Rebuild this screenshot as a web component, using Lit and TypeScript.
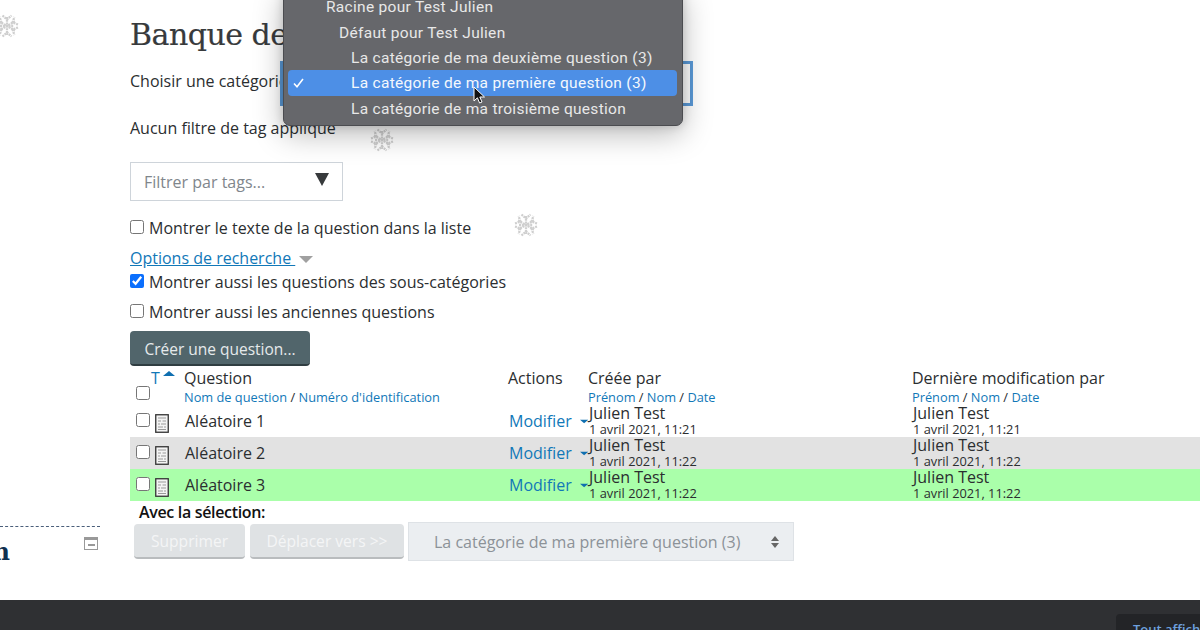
import { LitElement, html, css, svg } from "lit";
import { customElement } from "lit/decorators.js";

const flake = svg`<svg class="flake-svg" viewBox="0 0 28 28" width="28" height="28" fill="none" stroke="#cfcfcf" stroke-width="2.3" stroke-dasharray="2 .8">
  <path d="M14 5v18M6 9.500l16 9M22 9.500l-16 9"/>
  <path d="M9.500 3.500l4.500 4 4.500-4M3 12.500l5.500-2-2-5.500M25 12.500l-5.500-2 2-5.500M3 15.500l5.500 2-2 5.500M25 15.500l-5.500 2 2 5.500M9.500 24.500l4.500-4 4.500 4"/>
  <path d="M7 14h14"/>
</svg>`;

const docIcon = svg`<svg class="doc" viewBox="0 0 14 19" width="14" height="19">
  <rect x=".75" y=".75" width="12.5" height="17.5" fill="#f4f4f4" stroke="#333" stroke-width="1.3"/>
  <path d="M3 4h8M3 7h3M7.500 7H11M3 10h2M6 10h5M3 13h5M9 13h2M3 15.500h8" stroke="#9a9a9a" stroke-width="1.2"/>
</svg>`;

const caret = svg`<svg class="caret" viewBox="0 0 12 5" width="12" height="5"><path d="M0 0h12L6 5z" fill="#0f6fb0"/></svg>`;

interface Row { name: string; created: string; modified: string; cls: string; }
const rows: Row[] = [
  { name: "Aléatoire 1", created: "1 avril 2021, 11:21", modified: "1 avril 2021, 11:21", cls: "" },
  { name: "Aléatoire 2", created: "1 avril 2021, 11:22", modified: "1 avril 2021, 11:22", cls: "grey" },
  { name: "Aléatoire 3", created: "1 avril 2021, 11:22", modified: "1 avril 2021, 11:22", cls: "green" },
];

@customElement("app-root")
export class AppRoot extends LitElement {
  static styles = css`
    :host { display: block; width: 1200px; height: 630px; overflow: hidden; position: relative; background: #fff;
      font-family: "Open Sans", sans-serif; font-size: 16px; color: #2b2e30; }
    a { color: #0f6fb0; text-decoration: none; }
    .page { display: flex; height: 600px; overflow: hidden; }
    .side { width: 130px; flex: none; padding-top: 526px; box-sizing: border-box; }
    .side-inner { width: 100px; border-top: 1px dashed #4a5f7a; display: flex; justify-content: space-between; padding-top: 9px; }
    .side-title { font: 700 24px/26px "DejaVu Serif", serif; color: #10304f; margin-top: 3px; margin-left: -8px; width: 18px; overflow: hidden; text-align: right; }
    .min-icon { width: 14px; height: 13px; border: 1px solid #999; border-top-width: 3px; box-sizing: border-box; margin: 1px 2px 0 0; display: flex; align-items: center; justify-content: center; }
    .min-icon i { width: 7px; height: 2px; background: #999; }
    .main { width: 1070px; flex: none; }
    h1 { font: 400 30px/40px "DejaVu Serif", serif; color: #373a3c; margin: 15px 0 0; letter-spacing: -.5px; white-space: nowrap; -webkit-text-stroke: .2px #373a3c; }
    .cat { display: flex; align-items: center; height: 45px; margin-top: 6px; }
    .cat label { width: 150px; flex: none; white-space: nowrap; overflow: hidden; margin-bottom: 5px; }
    .cat-select { width: 413px; height: 45px; box-sizing: border-box; border: 3px solid #5b9ad8; background: #fff; }
    .notag { line-height: 22px; margin-top: 11px; white-space: nowrap; }
    .tags { width: 213px; height: 39px; box-sizing: border-box; border: 1px solid #ced4da; margin-top: 23px; display: flex; align-items: center; justify-content: space-between; padding: 0 13px 0 13px; color: #7f868c; }
    .tags .tri { width: 0; height: 0; border-left: 7px solid transparent; border-right: 7px solid transparent; border-top: 13px solid #373a3c; margin-top: -5px; }
    .chk { display: flex; align-items: center; gap: 5px; line-height: 22px; white-space: nowrap; }
    input[type=checkbox] { display: block; width: 14px; height: 14px; margin: 0; accent-color: #0b6ffd; flex: none; }
    .chk input { margin-bottom: 3px; }
    .c1 { margin-top: 16px; }
    .opts { line-height: 22px; margin-top: 8px; display: flex; align-items: center; gap: 4px; }
    .opts a { text-decoration: underline; white-space: pre; color: #1178b8; }
    .opts .tri { width: 0; height: 0; border-left: 7px solid transparent; border-right: 7px solid transparent; border-top: 7px solid #a0a0a0; margin-top: 2px; }
    .c2 { margin-top: 2px; }
    .c3 { margin-top: 8px; }
    .create { display: block; width: 180px; height: 35px; box-sizing: border-box; margin-top: 8px; background: #51656b; color: #e6eaeb; border: 0; border-bottom: 2px solid #2f3d41; border-radius: 4px; font: 400 15.5px "Open Sans", sans-serif; padding: 2px 0 0; }
    .grid { display: grid; grid-template-columns: 20px 34px 324px 80px 324px 288px; }
    .head { height: 38px; margin-top: 1px; line-height: 22px; white-space: nowrap; }
    .head .sub { display: block; font-size: 12.8px; line-height: 16px; margin-top: 0; color: #2b2e30; }
    .head .sub a { color: #1178b8; }
    .hchk { padding: 19px 0 0 6px; }
    .tcol { color: #1178b8; display: flex; gap: 3px; padding-left: 1px; }
    .tcol svg { margin-top: 4px; }
    .row { height: 32px; white-space: nowrap; }
    .row.grey { background: #e2e2e2; }
    .row.green { background: #aaffaa; }
    .rchk { padding: 8px 0 0 6px; }
    .ricon { padding: 9px 0 0 5px; }
    .doc { display: block; }
    .rname { padding-left: 1px; line-height: 32px; }
    .ract { padding-left: 1px; line-height: 32px; display: flex; align-items: center; gap: 8px; }
    .ract a { color: #1178b8; }
    .caret { margin-top: 1px; }
    .who { padding-left: 1px; margin-left: 0; }
    .who .n { display: block; line-height: 16px; margin-top: 0; }
    .who .d { display: block; font-size: 12.8px; line-height: 16px; }
    .withsel { font: 600 16px/20px "Open Sans", sans-serif; color: #111; margin: 1px 0 0 9px; letter-spacing: -.33px; height: 20px; }
    .actions { display: flex; align-items: center; gap: 5px; margin-left: 4px; height: 39px; }
    .btn { height: 35px; box-sizing: border-box; border: 0; border-bottom: 2px solid #b9bcbe; border-radius: 4px; background: #dfe2e4; color: #f4f5f6; font: 400 15.6px "Open Sans", sans-serif; padding: 0; }
    .b1 { width: 111px; } .b2 { width: 154px; }
    .sel { width: 386px; height: 39px; margin-left: -1px; box-sizing: border-box; background: #ebeef1; border: 1px solid #dee2e6; color: #8c9298; display: flex; align-items: center; justify-content: space-between; padding: 0 14px 0 25px; font-size: 16px; white-space: nowrap; }
    .updown { display: flex; flex-direction: column; gap: 2px; }
    .updown i { width: 0; height: 0; border-left: 4px solid transparent; border-right: 4px solid transparent; }
    .updown .u { border-bottom: 5px solid #666; }
    .updown .o { border-top: 5px solid #666; }
    footer { height: 30px; background: #2f3033; display: flex; justify-content: flex-end; padding-top: 14px; box-sizing: border-box; overflow: hidden; }
    .tab { width: 84px; height: 40px; box-sizing: border-box; background: #232427; border-radius: 4px 0 0 0; padding: 5px 0 0 17px; color: #6ea0de; font: 600 13px/20px "Open Sans", sans-serif; white-space: nowrap; overflow: hidden; flex: none; }
    .flake { position: absolute; line-height: 0; filter: blur(.5px); }
    .menu { position: absolute; left: 283px; top: -12px; width: 400px; height: 138px; box-sizing: border-box; padding: 6px 5px 4px 4px; background: #66676b; border: 1px solid #4b4c50; border-radius: 7px; box-shadow: 0 8px 30px rgba(0,0,0,.28), 0 0 10px rgba(0,0,0,.16); color: #e8e8e8; font: 400 15.5px/25.5px Roboto, sans-serif; letter-spacing: .3px; }
    .item { height: 25.5px; white-space: nowrap; border-radius: 4px; position: relative; }
    .l0 { padding-left: 38px; } .l1 { padding-left: 51px; } .l2 { padding-left: 63px; }
    .item.on { background: #4d8fe6; color: #f4f8fd; height: 26px; line-height: 26px; margin: -2px 0 1.5px; }
    .check { position: absolute; left: 5px; top: 8px; }
    .cursor { position: absolute; left: 473px; top: 86px; }
  `;

  render() {
    return html`
      <div class="page">
        <aside class="side">
          <div class="side-inner">
            <div class="side-title">n</div>
            <div class="min-icon"><i></i></div>
          </div>
        </aside>
        <main class="main">
          <h1>Banque de questions</h1>
          <div class="cat"><label>Choisir une catégorie</label><div class="cat-select"></div></div>
          <div class="notag">Aucun filtre de tag appliqué</div>
          <div class="tags"><span>Filtrer par tags...</span><span class="tri"></span></div>
          <label class="chk c1"><input type="checkbox" />Montrer le texte de la question dans la liste</label>
          <div class="opts"><a href="#">Options de recherche </a><span class="tri"></span></div>
          <label class="chk c2"><input type="checkbox" checked />Montrer aussi les questions des sous-catégories</label>
          <label class="chk c3"><input type="checkbox" />Montrer aussi les anciennes questions</label>
          <button class="create">Créer une question...</button>
          <div class="grid head">
            <div class="hchk"><input type="checkbox" /></div>
            <div class="tcol">T<svg viewBox="0 0 12 5" width="12" height="5"><path d="M0 5h12L6 0z" fill="#0f6fb0"/></svg></div>
            <div class="col">Question<span class="sub"><a href="#">Nom de question</a> / <a href="#">Numéro d'identification</a></span></div>
            <div class="col">Actions</div>
            <div class="col">Créée par<span class="sub"><a href="#">Prénom</a> / <a href="#">Nom</a> / <a href="#">Date</a></span></div>
            <div class="col">Dernière modification par<span class="sub"><a href="#">Prénom</a> / <a href="#">Nom</a> / <a href="#">Date</a></span></div>
          </div>
          ${rows.map(r => html`
            <div class="grid row ${r.cls}">
              <div class="rchk"><input type="checkbox" /></div>
              <div class="ricon">${docIcon}</div>
              <div class="rname">${r.name}</div>
              <div class="ract"><a href="#">Modifier</a>${caret}</div>
              <div class="who"><span class="n">Julien Test</span><span class="d">${r.created}</span></div>
              <div class="who"><span class="n">Julien Test</span><span class="d">${r.modified}</span></div>
            </div>`)}
          <div class="withsel">Avec la sélection:</div>
          <div class="actions">
            <button class="btn b1" disabled>Supprimer</button>
            <button class="btn b2" disabled>Déplacer vers &gt;&gt;</button>
            <div class="sel"><span>La catégorie de ma première question (3)</span><span class="updown"><i class="u"></i><i class="o"></i></span></div>
          </div>
        </main>
      </div>
      <footer><div class="tab">Tout afficher</div></footer>
      <div class="flake" style="left:-7px;top:12px">${flake}</div>
      <div class="flake" style="left:368px;top:126px">${flake}</div>
      <div class="flake" style="left:512px;top:211px">${flake}</div>
      <div class="menu">
        <div class="item l0">Racine pour Test Julien</div>
        <div class="item l1">Défaut pour Test Julien</div>
        <div class="item l2">La catégorie de ma deuxième question (3)</div>
        <div class="item l2 on">
          <svg class="check" viewBox="0 0 11 10" width="11" height="10"><path d="M1 5.500l3 3.200L10 1" fill="none" stroke="#fff" stroke-width="1.6"/></svg>
          La catégorie de ma première question (3)
        </div>
        <div class="item l2">La catégorie de ma troisième question</div>
      </div>
      <svg class="cursor" viewBox="0 0 13 19" width="13" height="19"><path d="M1 1v14l3.400-3.200L6.600 17l2.400-1-2.200-5H11.500z" fill="#111" stroke="#fff" stroke-width="1"/></svg>
    `;
  }
}
